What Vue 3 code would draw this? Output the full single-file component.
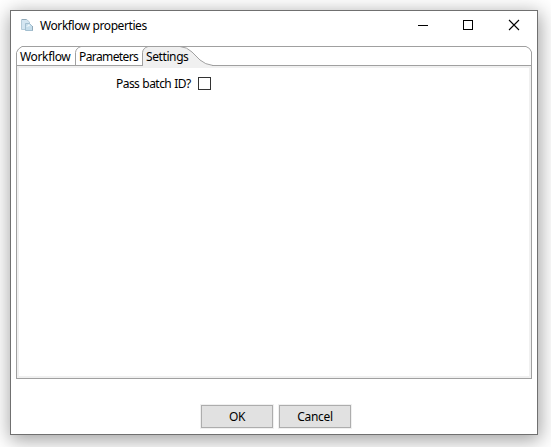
<script setup>
const tabs = [
  { label: 'Workflow', cls: 'workflow' },
  { label: 'Parameters', cls: 'parameters' },
  { label: 'Settings', cls: 'settings' },
]
</script>

<template>
  <div class="desktop">
    <section class="window">
      <header class="titlebar">
        <svg class="app-icon" width="13" height="14" viewBox="0 0 13 14">
          <path d="M.5 1.5h5L8.5 4v7.5h-8z" fill="#d3e5f1" stroke="#b4cbd9" />
          <path d="M4.5 5.5h4l3 3v4h-7z" fill="#c5ddeb" stroke="#a3bfd0" />
          <path d="M5 9l3-3 1 2z" fill="#eef6fa" />
          <path d="M1 1.5h4.5M11.5 8v4.5" stroke="#91a9b8" />
        </svg>
        <h1 class="title">Workflow properties</h1>
        <div class="controls">
          <svg width="10" height="10" viewBox="0 0 10 10" shape-rendering="crispEdges"><path d="M0 5.5h10" stroke="#000" /></svg>
          <svg width="10" height="10" viewBox="0 0 10 10"><rect x=".5" y=".5" width="9" height="9" fill="none" stroke="#000" /></svg>
          <svg class="close" width="10" height="10" viewBox="0 0 10 10"><path d="M0 0l10 10M10 0L0 10" stroke="#000" stroke-width="1.1" /></svg>
        </div>
      </header>

      <main class="folder">
        <nav class="strip">
          <svg class="outline" width="516" height="20" viewBox="0 0 516 20" fill="none" stroke="#a0a0a0">
            <path d="M126.5 20V6.5Q127 .5 133 .5H164Q171 1 176 6L184 14Q189 18.5 197 19.5V20z" fill="#f0f0f0" stroke="none" />
            <path d="M.5 20V6.5L2.5 3 6 .5H510L513.5 2.5 515.5 6V20" />
            <path d="M59.5 20V6.5Q60 2 65 .5M126.5 20V6.5Q127 2 132 .5M164 .5Q171 1 176 6L184 14Q189 18.5 197 19.5" />
            <path d="M0 19.5H127M196 19.5H516" />
          </svg>
          <span v-for="tab in tabs" :key="tab.cls" class="tab" :class="tab.cls">{{ tab.label }}</span>
        </nav>
        <div class="panel">
          <label class="field"><span class="field-label">Pass batch ID?</span><span class="checkbox"></span></label>
        </div>
      </main>

      <footer class="actions">
        <button class="ok">OK</button>
        <button class="cancel">Cancel</button>
      </footer>
    </section>
  </div>
</template>

<style>
body { margin: 0; overflow: hidden; }
</style>

<style scoped>
.desktop {
  box-sizing: border-box;
  width: 551px;
  height: 447px;
  padding: 10px;
  overflow: hidden;
  background: #fff;
  font: 12px/16px "Noto Sans", "Open Sans", sans-serif;
  color: #000;
}
.window {
  box-sizing: border-box;
  width: 528px;
  height: 425px;
  border: 1px solid #707070;
  background: #fff;
  box-shadow: 1px 4px 18px 1px rgba(0, 0, 0, .38);
}
.titlebar { display: flex; align-items: flex-start; height: 35px; padding-left: 10px; }
.app-icon { margin-top: 7px; }
.title { margin: 7px 0 0 6px; font: inherit; letter-spacing: -.42px; white-space: nowrap; }
.controls { display: flex; gap: 35px; margin: 9px 18px 0 auto; }
.controls svg { display: block; width: 10px; height: 10px; overflow: visible; }
.controls .close { margin-left: 1px; }
.folder { width: 516px; margin-left: 5px; }
.strip { position: relative; display: flex; height: 20px; padding-left: 4px; }
.outline { position: absolute; left: 0; top: 0; }
.tab { position: relative; padding-top: 3px; white-space: nowrap; letter-spacing: -.35px; }
.workflow { width: 59px; }
.parameters { width: 67px; letter-spacing: -.6px; }
.settings { letter-spacing: -.4px; }
.panel {
  box-sizing: border-box;
  height: 313px;
  padding: 8px 0 0 97px;
  border: 1px solid #a0a0a0;
  border-top: 0;
  box-shadow: inset 0 0 0 2px #f0f0f0;
}
.field { display: flex; align-items: flex-start; padding-left: 2px; }
.field-label { width: 82px; margin-top: 2px; white-space: nowrap; letter-spacing: -.55px; word-spacing: .5px; }
.checkbox { box-sizing: border-box; width: 13px; height: 13px; margin-top: 3px; border: 1px solid #333; }
.actions { display: flex; gap: 6px; margin: 26px 0 0 190px; }
.actions button {
  box-sizing: border-box;
  width: 72px;
  height: 23px;
  padding: 0;
  border: 1px solid #adadad;
  border-radius: 0;
  background: #e1e1e1;
  box-shadow: 0 0 0 1px #f0f0f0;
  font: inherit;
  letter-spacing: -.3px;
  color: #000;
}
</style>
